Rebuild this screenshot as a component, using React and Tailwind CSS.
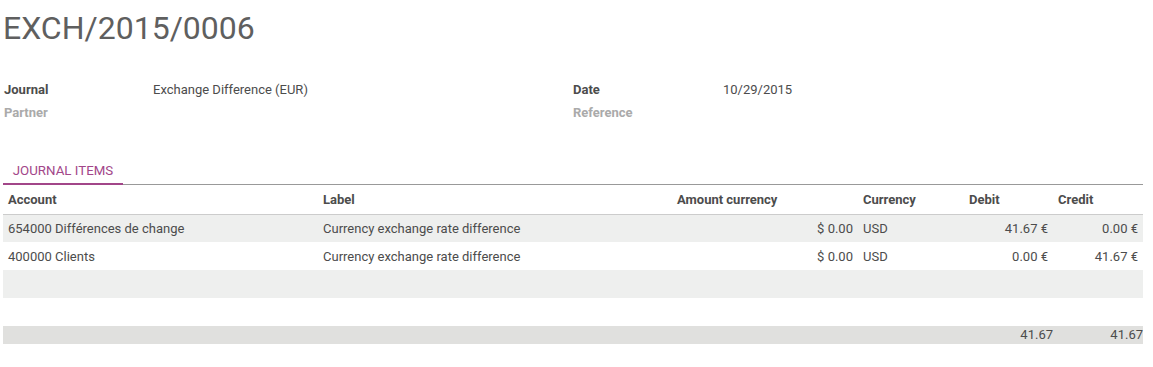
export default function App() {
  const rows = [
    { acc: "654000 Différences de change", label: "Currency exchange rate difference", amt: "$ 0.00", cur: "USD", debit: "41.67 €", credit: "0.00 €" },
    { acc: "400000 Clients", label: "Currency exchange rate difference", amt: "$ 0.00", cur: "USD", debit: "0.00 €", credit: "41.67 €" },
  ];
  return (
    <div className="w-[1153px] h-[367px] bg-white text-[13px] text-[#4c4c4c] overflow-hidden" style={{ fontFamily: "Roboto, 'Noto Sans', sans-serif" }}>
      <div className="pl-[3px] pr-[10px]">
        <h1 className="pt-[9px] text-[32px] leading-[38px] text-[#5f5f5f] font-normal">EXCH/2015/0006</h1>
        <div className="mt-[31px] grid grid-cols-[150px_420px_150px_1fr] leading-[23px]">
          <div className="font-bold pl-px">Journal</div>
          <div>Exchange Difference (EUR)</div>
          <div className="font-bold">Date</div>
          <div>10/29/2015</div>
          <div className="font-bold text-[#aaaaaa] pl-px">Partner</div>
          <div></div>
          <div className="font-bold text-[#aaaaaa]">Reference</div>
          <div></div>
        </div>
        <div className="mt-[30px] flex border-b border-[#999999]">
          <div className="w-[120px] text-center text-[#a24689] text-[13.3px] pt-[4px] leading-[25px] border-b-2 border-[#a24689] -mb-px">JOURNAL ITEMS</div>
        </div>
        <table className="w-[1140px] table-fixed border-collapse">
          <colgroup>
            <col className="w-[315px]" />
            <col className="w-[354px]" />
            <col className="w-[186px]" />
            <col className="w-[106px]" />
            <col className="w-[89px]" />
            <col className="w-[90px]" />
          </colgroup>
          <thead>
            <tr className="h-[29px] border-b border-[#cccccc] font-bold text-left">
              <th className="px-[5px] font-bold">Account</th>
              <th className="px-[5px] font-bold">Label</th>
              <th className="px-[5px] font-bold">Amount currency</th>
              <th className="px-[5px] font-bold">Currency</th>
              <th className="px-[5px] font-bold">Debit</th>
              <th className="px-[5px] font-bold">Credit</th>
            </tr>
          </thead>
          <tbody>
            {rows.map((r, i) => (
              <tr key={i} className={i % 2 === 0 ? "h-[28px] bg-[#eeefee]" : "h-[28px] bg-white"}>
                <td className="px-[5px] pt-px">{r.acc}</td>
                <td className="px-[5px] pt-px">{r.label}</td>
                <td className="px-[5px] pt-px text-right">{r.amt}</td>
                <td className="px-[5px] pt-px">{r.cur}</td>
                <td className="px-[5px] pt-px text-right">{r.debit}</td>
                <td className="px-[5px] pt-px text-right">{r.credit}</td>
              </tr>
            ))}
            <tr className="h-[28px] bg-[#eeefee]"><td colSpan={6}></td></tr>
            <tr className="h-[28px] bg-white"><td colSpan={6}></td></tr>
          </tbody>
          <tfoot>
            <tr className="h-[18px] bg-[#e0e0de]">
              <td></td>
              <td></td>
              <td></td>
              <td></td>
              <td className="text-right leading-[18px]">41.67</td>
              <td className="text-right leading-[18px]">41.67</td>
            </tr>
          </tfoot>
        </table>
      </div>
    </div>
  );
}
